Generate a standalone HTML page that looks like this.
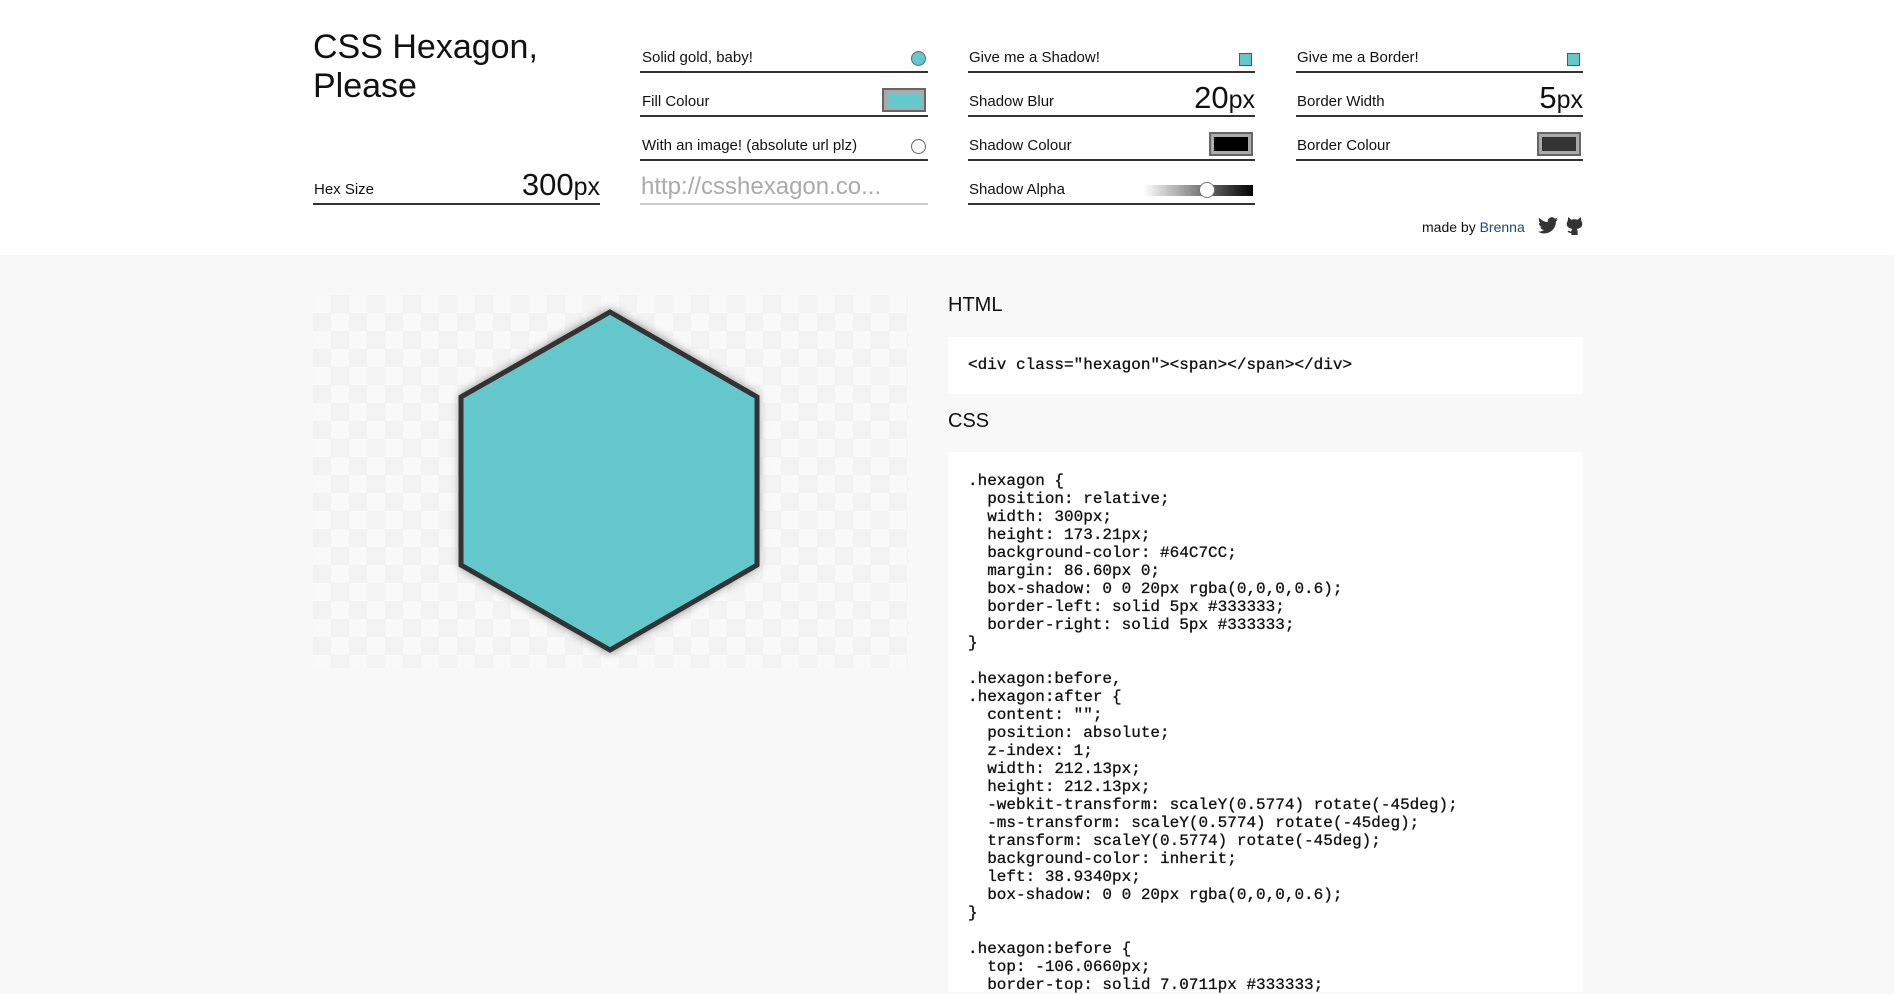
<!DOCTYPE html>
<html><head><meta charset="utf-8"><style>
*{margin:0;padding:0;box-sizing:border-box}
body{width:1894px;height:982px;overflow:hidden;background:#f8f8f8;font-family:"Liberation Sans",sans-serif;color:#111;position:relative}
.hdr{position:absolute;left:0;top:0;width:1894px;height:255px;background:#fff}
.a{position:absolute}
.lbl{position:absolute;font-size:15px;line-height:18px;color:#111;white-space:nowrap}
.ln{position:absolute;height:2px;background:#333}
.big{position:absolute;font-size:31px;line-height:34px;white-space:nowrap;text-align:right}
.big span{font-size:25px}
.sw{position:absolute;border:2px solid #666;background:#aaa;padding:3px}
.sw i{display:block;width:100%;height:100%}
.chk{position:absolute;width:13px;height:13px;background:#64c7cc;border:1px solid #555}
.rad{position:absolute;width:15px;height:15px;border-radius:50%;border:1px solid #666}
pre{font-family:"Liberation Mono",monospace;font-size:16px;line-height:18px;color:#111;-webkit-text-stroke:0.3px #111}
</style></head><body>
<div class="hdr"></div>
<div class="a" style="left:313px;top:28px;font-size:34px;line-height:39px;color:#111">CSS Hexagon,<br>Please</div>
<div class="lbl" style="left:314px;top:181px">Hex Size</div>
<div class="big" style="left:480px;top:168px;width:120px">300<span>px</span></div>
<div class="ln" style="left:313px;top:203px;width:287px"></div>

<div class="lbl" style="left:642px;top:49px">Solid gold, baby!</div>
<div class="rad" style="left:911px;top:51px;background:#64c7cc"></div>
<div class="ln" style="left:640px;top:71px;width:288px"></div>
<div class="lbl" style="left:642px;top:93px">Fill Colour</div>
<div class="sw" style="left:882px;top:88px;width:44px;height:24px"><i style="background:#64c7cc"></i></div>
<div class="ln" style="left:640px;top:115px;width:288px"></div>
<div class="lbl" style="left:642px;top:137px">With an image! (absolute url plz)</div>
<div class="rad" style="left:911px;top:139px;background:#f8f8f8"></div>
<div class="ln" style="left:640px;top:159px;width:288px"></div>
<div class="a" style="left:641px;top:173px;font-size:24px;color:#aaa;white-space:nowrap">http://csshexagon.co...</div>
<div class="ln" style="left:640px;top:203px;width:288px;background:#ccc"></div>

<div class="lbl" style="left:969px;top:49px">Give me a Shadow!</div>
<div class="chk" style="left:1239px;top:53px"></div>
<div class="ln" style="left:968px;top:71px;width:287px"></div>
<div class="lbl" style="left:969px;top:93px">Shadow Blur</div>
<div class="big" style="left:1135px;top:81px;width:120px">20<span>px</span></div>
<div class="ln" style="left:968px;top:115px;width:287px"></div>
<div class="lbl" style="left:969px;top:137px">Shadow Colour</div>
<div class="sw" style="left:1209px;top:132px;width:44px;height:24px"><i style="background:#000"></i></div>
<div class="ln" style="left:968px;top:159px;width:287px"></div>
<div class="lbl" style="left:969px;top:181px">Shadow Alpha</div>
<div class="a" style="left:1143px;top:185px;width:110px;height:11px;background:linear-gradient(90deg,rgba(0,0,0,0),#000)"></div>
<div class="a" style="left:1199px;top:182px;width:16px;height:16px;border-radius:50%;background:#fff;border:1px solid #777"></div>
<div class="ln" style="left:968px;top:203px;width:287px"></div>

<div class="lbl" style="left:1297px;top:49px">Give me a Border!</div>
<div class="chk" style="left:1567px;top:53px"></div>
<div class="ln" style="left:1296px;top:71px;width:287px"></div>
<div class="lbl" style="left:1297px;top:93px">Border Width</div>
<div class="big" style="left:1463px;top:81px;width:120px">5<span>px</span></div>
<div class="ln" style="left:1296px;top:115px;width:287px"></div>
<div class="lbl" style="left:1297px;top:137px">Border Colour</div>
<div class="sw" style="left:1537px;top:132px;width:44px;height:24px"><i style="background:#333"></i></div>
<div class="ln" style="left:1296px;top:159px;width:287px"></div>

<div class="lbl" style="left:1422px;top:218px;font-size:14px">made by <span style="color:#23486e">Brenna</span></div>
<svg class="a" style="left:1538px;top:217px" width="20" height="17" viewBox="0 0 24 20"><path fill="#333" d="M24 2.4a10 10 0 0 1-2.8.8A5 5 0 0 0 23.3.5a10 10 0 0 1-3.1 1.2A4.9 4.9 0 0 0 11.8 6 14 14 0 0 1 1.7.9a4.9 4.9 0 0 0 1.5 6.6A4.900 4.9 0 0 1 1 6.9 4.9 4.9 0 0 0 4.9 11.800a5 5 0 0 1-2.2.1 4.9 4.9 0 0 0 4.6 3.4A9.900 9.9 0 0 1 0 17.3 14 14 0 0 0 7.5 19.500c9 0 14-7.500 14-14v-.6A10 10 0 0 0 24 2.4z"/></svg>
<svg class="a" style="left:1566px;top:216px" width="17" height="19" viewBox="0 0 16 18"><path fill="#333" d="M2 1l3 2.5Q8 2.6 11 3.5L14 1l.5 4Q16 7 15 9.5 13.500 12 10 12.200q1 1 1 2.5V18H5v-2q-3 .5-3.5-2h1.5q.5 1 2 .6v-.2q0-1.5 1-2.2Q2.500 12 1 9.5 0 7 1.5 5z"/></svg>

<div class="a" style="left:313px;top:295px;width:595px;height:373px;background-color:#f9f9f9;background-image:linear-gradient(45deg,#f3f3f3 25%,transparent 25%,transparent 75%,#f3f3f3 75%),linear-gradient(45deg,#f3f3f3 25%,transparent 25%,transparent 75%,#f3f3f3 75%);background-size:36px 36px;background-position:0 0,18px 18px"></div>
<svg class="a" style="left:313px;top:295px" width="595" height="373">
<defs><filter id="f" x="-20%" y="-20%" width="140%" height="140%"><feGaussianBlur stdDeviation="5"/></filter></defs>
<polygon points="297,15 444,101 444,271 297,357 148,271 148,101" fill="rgba(0,0,0,0.55)" filter="url(#f)"/>
<polygon points="297,17 444,102 444,270 297,355 148,270 148,102" fill="#64c7cc" stroke="#333" stroke-width="5" stroke-linejoin="miter"/>
</svg>

<div class="a" style="left:948px;top:294px;font-size:20px;color:#111">HTML</div>
<div class="a" style="left:948px;top:337px;width:635px;height:57px;background:#fff"></div>
<pre class="a" style="left:968px;top:356px">&lt;div class="hexagon"&gt;&lt;span&gt;&lt;/span&gt;&lt;/div&gt;</pre>
<div class="a" style="left:948px;top:410px;font-size:20px;color:#111">CSS</div>
<div class="a" style="left:948px;top:452px;width:635px;height:540px;background:#fff"></div>
<pre class="a" style="left:968px;top:472px">.hexagon {
  position: relative;
  width: 300px;
  height: 173.21px;
  background-color: #64C7CC;
  margin: 86.60px 0;
  box-shadow: 0 0 20px rgba(0,0,0,0.6);
  border-left: solid 5px #333333;
  border-right: solid 5px #333333;
}

.hexagon:before,
.hexagon:after {
  content: "";
  position: absolute;
  z-index: 1;
  width: 212.13px;
  height: 212.13px;
  -webkit-transform: scaleY(0.5774) rotate(-45deg);
  -ms-transform: scaleY(0.5774) rotate(-45deg);
  transform: scaleY(0.5774) rotate(-45deg);
  background-color: inherit;
  left: 38.9340px;
  box-shadow: 0 0 20px rgba(0,0,0,0.6);
}

.hexagon:before {
  top: -106.0660px;
  border-top: solid 7.0711px #333333;
</pre>
</body></html>
